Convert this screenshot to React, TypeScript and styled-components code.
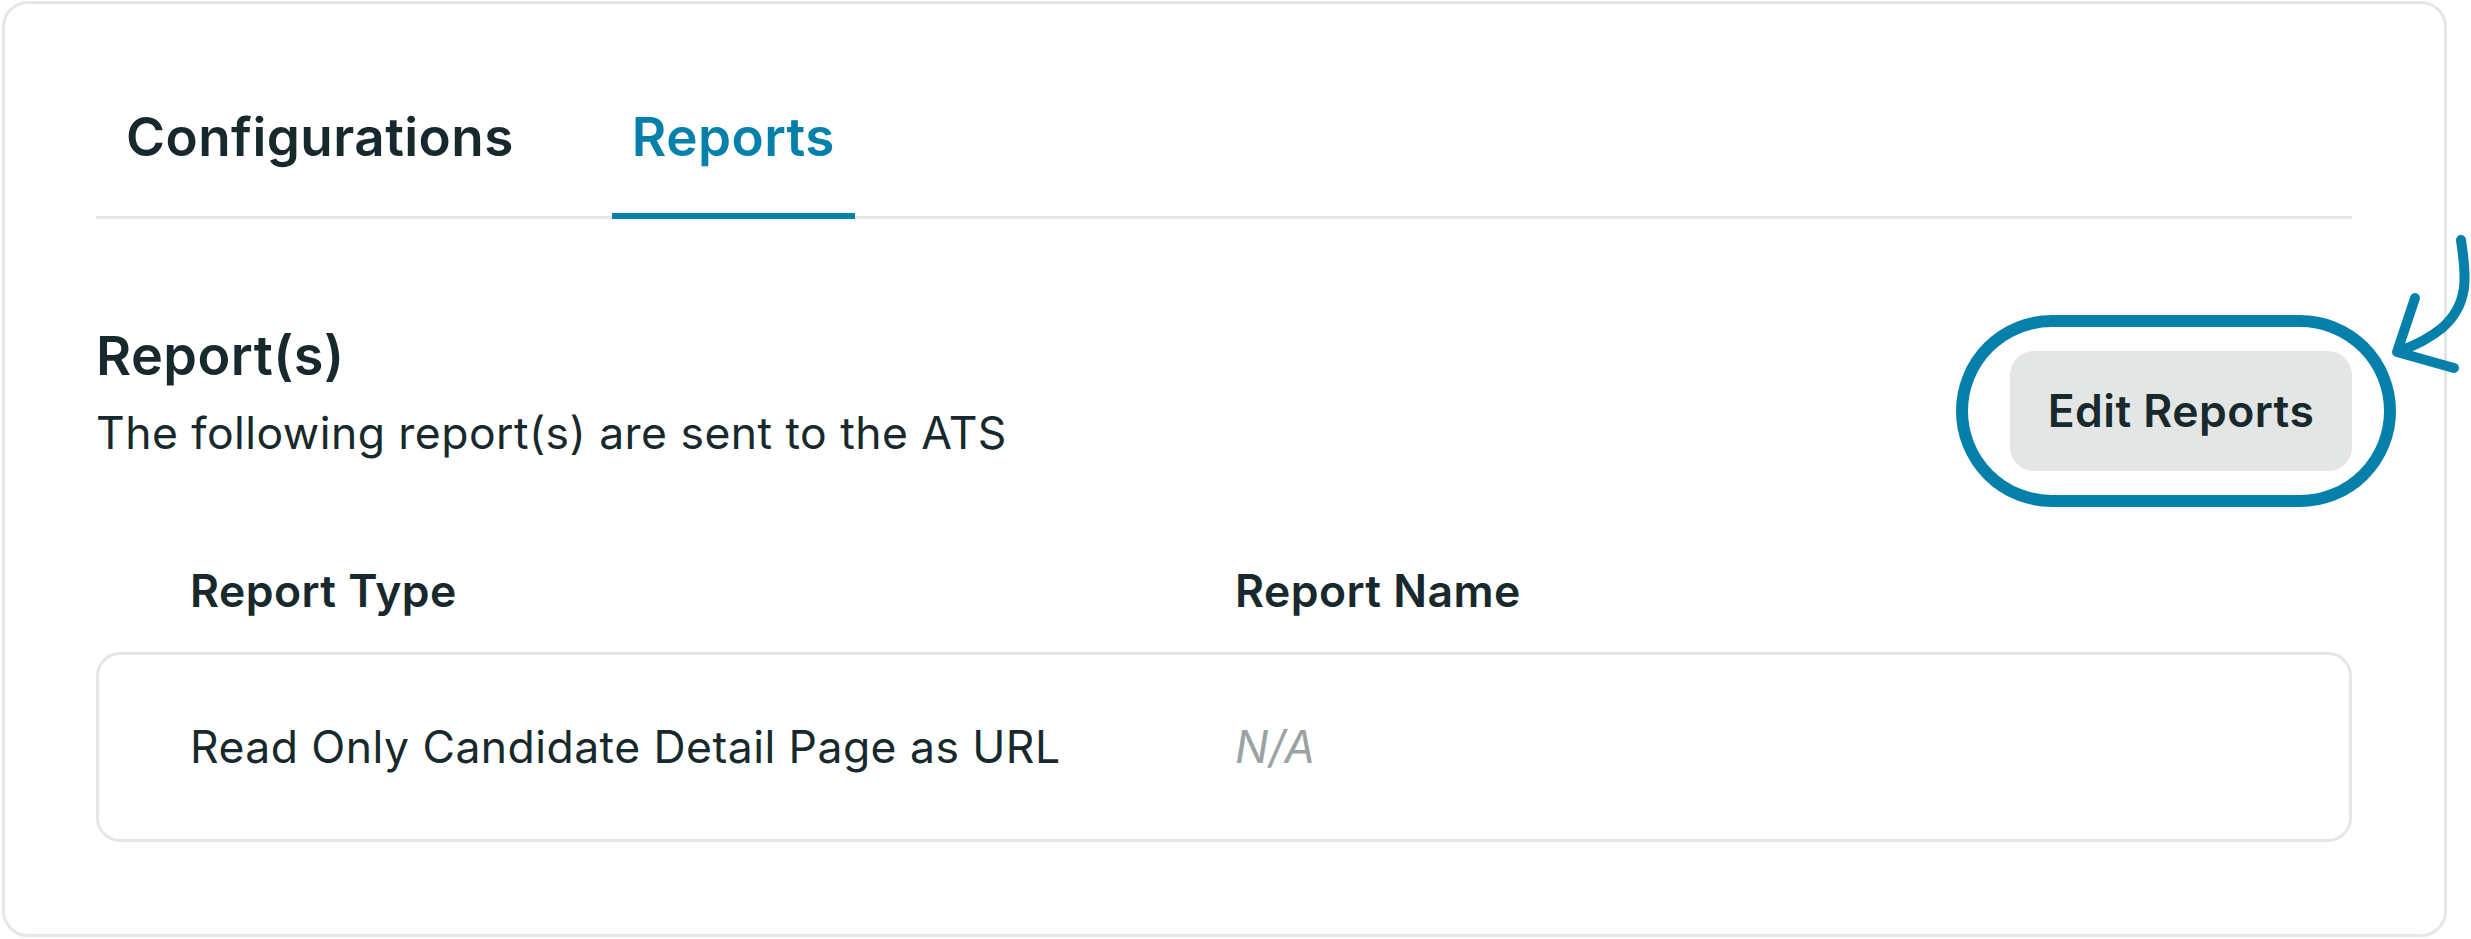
import React from "react";
import styled, { createGlobalStyle } from "styled-components";

const Global = createGlobalStyle`
  html, body { margin: 0; padding: 0; background: #ffffff; }
  body {
    font-family: Inter, "Noto Sans", sans-serif;
    letter-spacing: 0.028em;
    color: #18292d;
  }
  * { box-sizing: border-box; }
`;

const Page = styled.div`
  padding: 1px 0 2px 2px;
  width: 2471px;
`;

const Card = styled.div`
  width: 2445px;
  border: 3px solid #e5e6e6;
  border-radius: 26px;
  padding: 102px 92px 92px 91px;
  background: #ffffff;
`;

const TabList = styled.div`
  display: flex;
  gap: 78px;
  padding-left: 10px;
  border-bottom: 3px solid #e5e6e6;
`;

const Tab = styled.div<{ $active?: boolean }>`
  font-size: 53px;
  line-height: 63px;
  font-weight: 600;
  padding: 0 20px 44px;
  margin-bottom: -3px;
  border-bottom: 6px solid ${(p) => (p.$active ? "#0580ab" : "transparent")};
  color: ${(p) => (p.$active ? "#0580ab" : "#18292d")};
`;

const Section = styled.div`
  display: flex;
  justify-content: space-between;
  align-items: flex-start;
  margin-top: 105px;
`;

const Intro = styled.div`
  display: flex;
  flex-direction: column;
  gap: 20px;
`;

const Heading = styled.h2`
  margin: 0;
  font-size: 54px;
  line-height: 63px;
  font-weight: 600;
`;

const Subtitle = styled.p`
  margin: 0;
  font-size: 44.5px;
  line-height: 52px;
  font-weight: 400;
`;

const ButtonWrap = styled.div`
  position: relative;
  margin-top: 27px;
`;

const EditButton = styled.button`
  width: 342px;
  height: 120px;
  border: none;
  border-radius: 24px;
  background: #e4e6e5;
  color: #18292d;
  font-family: inherit;
  letter-spacing: inherit;
  font-size: 44.5px;
  font-weight: 600;
  cursor: pointer;
`;

const Highlight = styled.div`
  position: absolute;
  top: -36px;
  bottom: -36px;
  left: -54px;
  right: -44px;
  border: 12px solid #0580ab;
  border-radius: 96px;
  pointer-events: none;
`;

const Arrow = styled.svg`
  position: absolute;
  left: 370px;
  top: -121px;
  overflow: visible;
  pointer-events: none;
`;

const Grid = styled.div`
  display: grid;
  grid-template-columns: 1045px 1fr;
  align-items: center;
`;

const HeaderRow = styled(Grid)`
  margin-top: 94px;
  padding: 0 94px;
`;

const HeaderCell = styled.div`
  font-size: 44.5px;
  line-height: 52px;
  font-weight: 600;
`;

const DataRow = styled(Grid)`
  margin-top: 35px;
  height: 190px;
  padding: 0 91px;
  border: 3px solid #e5e6e6;
  border-radius: 24px;
`;

const Cell = styled.div<{ $muted?: boolean }>`
  font-size: 44.5px;
  line-height: 52px;
  font-weight: 400;
  color: ${(p) => (p.$muted ? "#9aa2a4" : "#18292d")};
  font-style: ${(p) => (p.$muted ? "italic" : "normal")};
`;

export default function App() {
  return (
    <Page>
      <Global />
      <Card>
        <TabList>
          <Tab>Configurations</Tab>
          <Tab $active>Reports</Tab>
        </TabList>
        <Section>
          <Intro>
            <Heading>Report(s)</Heading>
            <Subtitle>The following report(s) are sent to the ATS</Subtitle>
          </Intro>
          <ButtonWrap>
            <EditButton>Edit Reports</EditButton>
            <Highlight />
            <Arrow width="91" height="150" viewBox="0 0 91 150">
              <path
                d="M81 10 C85 40 92 72 62 98 C50 108 36 115 20 121"
                fill="none"
                stroke="#0580ab"
                strokeWidth="10"
                strokeLinecap="round"
                strokeLinejoin="round"
              />
              <path
                d="M35 68 L17 122 L74 138"
                fill="none"
                stroke="#0580ab"
                strokeWidth="10"
                strokeLinecap="round"
                strokeLinejoin="round"
              />
            </Arrow>
          </ButtonWrap>
        </Section>
        <HeaderRow>
          <HeaderCell>Report Type</HeaderCell>
          <HeaderCell>Report Name</HeaderCell>
        </HeaderRow>
        <DataRow>
          <Cell>Read Only Candidate Detail Page as URL</Cell>
          <Cell $muted>N/A</Cell>
        </DataRow>
      </Card>
    </Page>
  );
}
